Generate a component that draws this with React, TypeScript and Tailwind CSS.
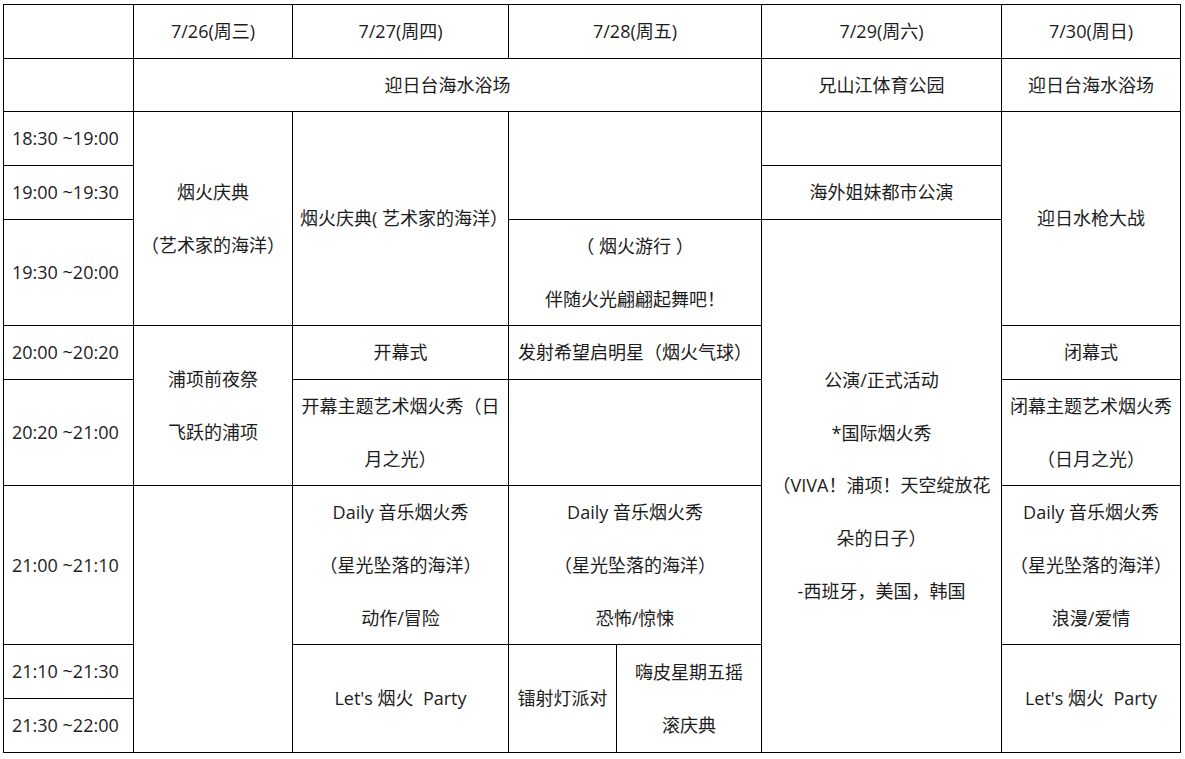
import React from 'react';

// one schedule cell: each entry in `lines` is its own paragraph
const Cell = ({
    lines = [],
    colSpan,
    rowSpan,
    nowrap,
}: {
    lines?: string[];
    colSpan?: number;
    rowSpan?: number;
    nowrap?: boolean;
}) => (
    <td
        colSpan={colSpan}
        rowSpan={rowSpan}
        className={`border border-black px-[7px] py-0 text-center align-middle ${nowrap ? "whitespace-nowrap" : ""}`}
    >
        {lines.map((l, i) => (
            <div key={i}>{l}</div>
        ))}
    </td>
);

const Time = ({ t }: { t: string }) => (
    <td className="border border-black pl-2 pr-1 py-0 text-left align-middle whitespace-nowrap">{t}</td>
);

const daily = (genre: string) => ["Daily 音乐烟火秀", "（星光坠落的海洋）", genre];

const App: React.FC = () => {
    return (
        <div className="min-h-screen w-full bg-white pl-[3px] pt-[4px]">
            <table className="w-[1177px] table-fixed border-collapse text-[18px] leading-[52.7px] text-[#1c1c1c] font-[family-name:'Open_Sans','Noto_Sans_CJK_SC',sans-serif]">
                <colgroup>
                    <col className="w-[130px]" />
                    <col className="w-[159px]" />
                    <col className="w-[216px]" />
                    <col className="w-[108px]" />
                    <col className="w-[145px]" />
                    <col className="w-[240px]" />
                    <col className="w-[179px]" />
                </colgroup>
                <tbody>
                    <tr>
                        <Cell />
                        <Cell lines={["7/26(周三)"]} />
                        <Cell lines={["7/27(周四)"]} />
                        <Cell colSpan={2} lines={["7/28(周五)"]} />
                        <Cell lines={["7/29(周六)"]} />
                        <Cell lines={["7/30(周日)"]} />
                    </tr>
                    <tr>
                        <Cell />
                        <Cell colSpan={4} lines={["迎日台海水浴场"]} />
                        <Cell lines={["兄山江体育公园"]} />
                        <Cell lines={["迎日台海水浴场"]} />
                    </tr>
                    <tr>
                        <Time t="18:30 ~19:00" />
                        <Cell rowSpan={3} lines={["烟火庆典", "（艺术家的海洋）"]} />
                        <Cell rowSpan={3} nowrap lines={["烟火庆典( 艺术家的海洋）"]} />
                        <Cell colSpan={2} rowSpan={2} />
                        <Cell />
                        <Cell rowSpan={3} lines={["迎日水枪大战"]} />
                    </tr>
                    <tr>
                        <Time t="19:00 ~19:30" />
                        <Cell lines={["海外姐妹都市公演"]} />
                    </tr>
                    <tr>
                        <Time t="19:30 ~20:00" />
                        <Cell colSpan={2} lines={["（ 烟火游行 ）", "伴随火光翩翩起舞吧！"]} />
                        <Cell
                            rowSpan={6}
                            lines={["公演/正式活动", "*国际烟火秀", "（VIVA！浦项！天空绽放花", "朵的日子）", "-西班牙，美国，韩国"]}
                        />
                    </tr>
                    <tr>
                        <Time t="20:00 ~20:20" />
                        <Cell rowSpan={2} lines={["浦项前夜祭", "飞跃的浦项"]} />
                        <Cell lines={["开幕式"]} />
                        <Cell colSpan={2} lines={["发射希望启明星（烟火气球）"]} />
                        <Cell lines={["闭幕式"]} />
                    </tr>
                    <tr>
                        <Time t="20:20 ~21:00" />
                        <Cell lines={["开幕主题艺术烟火秀（日", "月之光）"]} />
                        <Cell colSpan={2} />
                        <Cell lines={["闭幕主题艺术烟火秀", "（日月之光）"]} />
                    </tr>
                    <tr>
                        <Time t="21:00 ~21:10" />
                        <Cell rowSpan={3} />
                        <Cell lines={daily("动作/冒险")} />
                        <Cell colSpan={2} lines={daily("恐怖/惊悚")} />
                        <Cell lines={daily("浪漫/爱情")} />
                    </tr>
                    <tr>
                        <Time t="21:10 ~21:30" />
                        <Cell rowSpan={2} lines={["Let's 烟火\u00a0 Party"]} />
                        <Cell rowSpan={2} lines={["镭射灯派对"]} />
                        <Cell rowSpan={2} lines={["嗨皮星期五摇", "滚庆典"]} />
                        <Cell rowSpan={2} lines={["Let's 烟火\u00a0 Party"]} />
                    </tr>
                    <tr>
                        <Time t="21:30 ~22:00" />
                    </tr>
                </tbody>
            </table>
        </div>
    );
};

export default App;
